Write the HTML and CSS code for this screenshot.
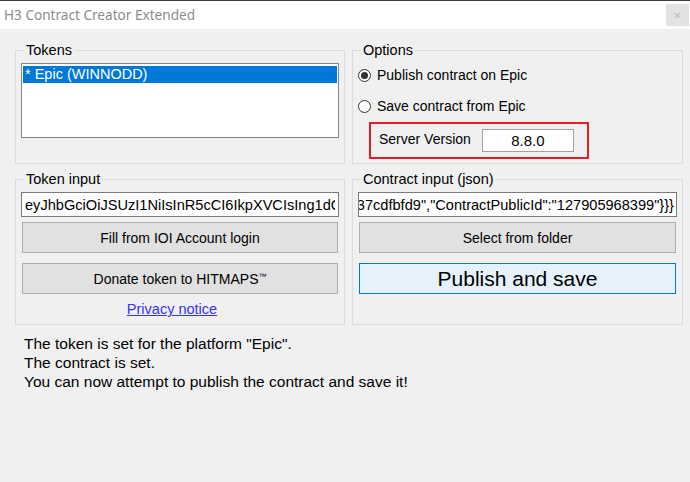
FILE: index.html
```html
<!DOCTYPE html>
<html lang="en">
<head>
    <meta charset="UTF-8">
    <title>H3 Contract Creator Extended</title>
    <link rel="stylesheet" href="styles.css">
</head>
<body>
    <div class="titlebar">
        <span class="title">H3 Contract Creator Extended</span>
        <button class="close-btn">&#x2715;</button>
    </div>

    <div class="main">
        <div class="groups">
            <fieldset class="group">
                <legend>Tokens</legend>
                <div class="listbox">
                    <div class="list-item selected">* Epic (WINNODD)</div>
                </div>
            </fieldset>

            <fieldset class="group">
                <legend>Options</legend>
                <label class="radio-row first">
                    <span class="radio checked"></span>
                    Publish contract on Epic
                </label>
                <label class="radio-row">
                    <span class="radio"></span>
                    Save contract from Epic
                </label>
                <div class="server-box">
                    <span class="server-label">Server Version</span>
                    <input type="text" class="server-input" value="8.8.0">
                </div>
            </fieldset>

            <fieldset class="group">
                <legend>Token input</legend>
                <input type="text" class="text-field" value="eyJhbGciOiJSUzI1NiIsInR5cCI6IkpXVCIsIng1dCI6IjU0">
                <button class="btn first-btn">Fill from IOI Account login</button>
                <button class="btn">Donate token to HITMAPS<sup class="tm">™</sup></button>
                <div class="privacy"><a href="#">Privacy notice</a></div>
            </fieldset>

            <fieldset class="group">
                <legend>Contract input (json)</legend>
                <div class="text-field scrolled-end">
                    <span>{"Data":{"Id":"b3a6c1f2-7d44-4e1b-9a2c-5f0e37cdfbfd9","ContractPublicId":"127905968399"}}}</span>
                </div>
                <button class="btn first-btn">Select from folder</button>
                <button class="btn btn-primary">Publish and save</button>
            </fieldset>
        </div>

        <div class="status">
            <p>The token is set for the platform "Epic".</p>
            <p>The contract is set.</p>
            <p>You can now attempt to publish the contract and save it!</p>
        </div>
    </div>
</body>
</html>
```

FILE: styles.css
```css
* {
    box-sizing: border-box;
}

body {
    margin: 0;
    width: 690px;
    height: 482px;
    background: #f0f0f0;
    font-family: 'Liberation Sans', Arial, sans-serif;
    font-size: 14px;
    color: #000;
    overflow: hidden;
}

/* window title bar */
.titlebar {
    display: flex;
    align-items: flex-start;
    height: 29px;
    background: #fff;
    border-top: 1px solid #3a3a3a;
}

.title {
    font-family: 'Noto Sans', sans-serif;
    font-size: 13.6px;
    color: #8c8c8c;
    line-height: 28px;
    padding-left: 4px;
}

.close-btn {
    margin: 3px 1px 0 auto;
    width: 23px;
    height: 22px;
    border: none;
    padding: 0;
    background: #e3e3e3;
    color: #bcbcbc;
    font-size: 10px;
    font-family: 'DejaVu Sans', sans-serif;
}

.main {
    padding: 13px 7px 0 15px;
}

.groups {
    display: grid;
    grid-template-columns: 330px 331px;
    grid-template-rows: 122px 154px;
    column-gap: 7px;
    row-gap: 7px;
}

.group {
    margin: 0;
    min-width: 0;
    padding: 0 5px;
    border: 1px solid #dcdcdc;
    display: flex;
    flex-direction: column;
}

.group legend {
    margin-left: 3px;
    padding: 0 2px;
    font-size: 14.5px;
    line-height: 16px;
}

/* tokens list */
.listbox {
    margin-top: 5px;
    height: 75px;
    background: #fff;
    border: 1px solid #828790;
    padding: 2px 1px;
}

.list-item {
    height: 17px;
    line-height: 17px;
    padding-left: 2px;
    font-size: 14.5px;
}

.list-item.selected {
    background: #0078d7;
    color: #fff;
}

/* options */
.radio-row {
    display: flex;
    align-items: center;
    gap: 6px;
    height: 20px;
    margin-top: 11px;
    font-size: 14px;
}

.radio-row.first {
    margin-top: 7px;
}

.radio {
    position: relative;
    width: 13px;
    height: 13px;
    border: 1px solid #333;
    border-radius: 50%;
    background: #fff;
    flex-shrink: 0;
}

.radio.checked::after {
    content: '';
    position: absolute;
    left: 2px;
    top: 2px;
    width: 7px;
    height: 7px;
    border-radius: 50%;
    background: #333;
}

.server-box {
    display: flex;
    align-items: center;
    margin: 6px 0 0 11px;
    width: 220px;
    height: 37px;
    border: 2px solid #e81c24;
    padding-left: 8px;
}

.server-label {
    font-size: 14px;
    margin-top: -3px;
}

.server-input {
    margin-left: 11px;
    width: 92px;
    height: 23px;
    border: 1px solid #a0a0a0;
    background: #fff;
    text-align: center;
    font-family: inherit;
    font-size: 15px;
    padding: 0;
}

/* inputs and buttons */
.text-field {
    margin-top: 5px;
    height: 25px;
    width: 100%;
    border: 1px solid #7a7a7a;
    background: #fff;
    font-family: inherit;
    font-size: 14.6px;
    padding: 0 3px;
    color: #000;
}

.scrolled-end {
    display: flex;
    justify-content: flex-end;
    align-items: center;
    overflow: hidden;
    white-space: nowrap;
    padding: 0 2px;
}

.scrolled-end span {
    flex-shrink: 0;
}

.btn {
    margin: 10px 1px 0;
    height: 31px;
    border: 1px solid #adadad;
    background: #e1e1e1;
    font-family: inherit;
    font-size: 14px;
    color: #000;
    padding: 0;
}

.btn.first-btn {
    margin-top: 5px;
}

.btn .tm {
    font-size: 8px;
    vertical-align: 5px;
}

.btn-primary {
    background: #e5f1fb;
    border-color: #0078d7;
    font-size: 21px;
}

.privacy {
    margin-top: 7px;
    padding-right: 16px;
    text-align: center;
    line-height: 16px;
    font-size: 14.5px;
}

.privacy a {
    color: #3333ff;
}

/* status messages */
.status {
    margin-top: 9px;
    padding-left: 9px;
    font-size: 15.5px;
    line-height: 19px;
}

.status p {
    margin: 0;
}
```
